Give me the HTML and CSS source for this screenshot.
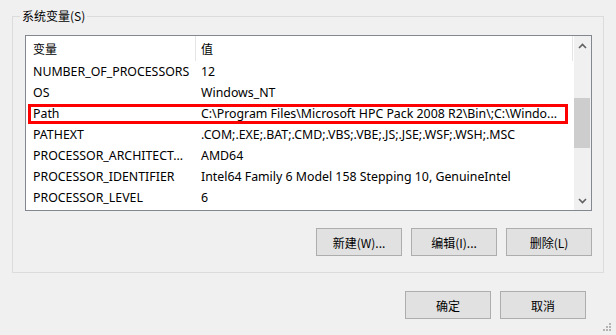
FILE: index.html
```html
<!DOCTYPE html>
<html lang="zh-CN">
<head>
<meta charset="utf-8">
<title>系统变量</title>
<link rel="stylesheet" href="styles.css">
</head>
<body>
<div class="group">
  <span class="group-title">系统变量(S)</span>
  <div class="listview">
    <div class="table">
      <div class="header">
        <div class="hcell c1">变量</div>
        <div class="hcell c2">值</div>
      </div>
      <div class="row"><div class="cell c1">NUMBER_OF_PROCESSORS</div><div class="cell c2">12</div></div>
      <div class="row"><div class="cell c1">OS</div><div class="cell c2">Windows_NT</div></div>
      <div class="row"><div class="cell c1">Path</div><div class="cell c2">C:\Program Files\Microsoft HPC Pack 2008 R2\Bin\;C:\Windo...</div></div>
      <div class="row"><div class="cell c1">PATHEXT</div><div class="cell c2">.COM;.EXE;.BAT;.CMD;.VBS;.VBE;.JS;.JSE;.WSF;.WSH;.MSC</div></div>
      <div class="row"><div class="cell c1">PROCESSOR_ARCHITECT...</div><div class="cell c2">AMD64</div></div>
      <div class="row"><div class="cell c1">PROCESSOR_IDENTIFIER</div><div class="cell c2">Intel64 Family 6 Model 158 Stepping 10, GenuineIntel</div></div>
      <div class="row"><div class="cell c1">PROCESSOR_LEVEL</div><div class="cell c2">6</div></div>
    </div>
    <div class="scrollbar">
      <div class="sb-btn">
        <svg width="17" height="17" viewBox="0 0 17 17"><polyline points="5,12 8.5,8.5 12,12" fill="none" stroke="#606060" stroke-width="1.6"/></svg>
      </div>
      <div class="sb-track"><div class="sb-thumb"></div></div>
      <div class="sb-btn">
        <svg width="17" height="17" viewBox="0 0 17 17"><polyline points="5,6 8.5,9.5 12,6" fill="none" stroke="#606060" stroke-width="1.6"/></svg>
      </div>
    </div>
    <div class="highlight"></div>
  </div>
  <div class="btn-row">
    <button class="btn">新建(W)...</button>
    <button class="btn">编辑(I)...</button>
    <button class="btn">删除(L)</button>
  </div>
</div>
<div class="dialog-row">
  <button class="btn">确定</button>
  <button class="btn">取消</button>
</div>
<svg class="grip" width="12" height="12" viewBox="0 0 12 12">
  <rect x="7" y="1" width="2" height="2" fill="#b4b4b4"/>
  <rect x="4" y="4" width="2" height="2" fill="#b4b4b4"/>
  <rect x="7" y="4" width="2" height="2" fill="#b4b4b4"/>
  <rect x="1" y="7" width="2" height="2" fill="#b4b4b4"/>
  <rect x="4" y="7" width="2" height="2" fill="#b4b4b4"/>
  <rect x="7" y="7" width="2" height="2" fill="#b4b4b4"/>
</svg>
</body>
</html>
```
FILE: styles.css
```css
html, body {
  margin: 0;
  padding: 0;
  background: #f0f0f0;
  width: 616px;
  height: 335px;
  overflow: hidden;
}
body {
  position: relative;
  font-family: "Noto Sans", "Noto Sans CJK SC", sans-serif;
  font-size: 12px;
  color: #000;
}
.group {
  position: relative;
  margin: 16px 0 0 12px;
  width: 567px;
  border: 1px solid #dcdcdc;
  padding: 18px 11px 16px 12px;
}
.group-title {
  position: absolute;
  left: 7px;
  top: -9px;
  padding: 0 2px;
  line-height: 16px;
  background: #f0f0f0;
  font-family: "Noto Sans CJK SC", "Noto Sans", sans-serif;
}
.listview {
  position: relative;
  display: flex;
  height: 174px;
  border: 1px solid #828790;
  background: #fff;
}
.table {
  width: 548px;
  overflow: hidden;
}
.header {
  display: flex;
  height: 25px;
}
.hcell {
  display: flex;
  align-items: center;
  font-family: "Noto Sans CJK SC", sans-serif;
  box-sizing: border-box;
  border-right: 1px solid #e5e5e5;
}
.hcell.c1 { width: 170px; padding-left: 7px; }
.hcell.c2 { width: 377px; padding-left: 5px; }
.row {
  display: flex;
  height: 21px;
  align-items: center;
  white-space: nowrap;
  font-size: 12.35px;
}
.cell {
  box-sizing: border-box;
  overflow: hidden;
}
.cell.c1 { width: 170px; padding-left: 7px; }
.cell.c2 { flex: 1; padding-left: 5px; }
.scrollbar {
  width: 17px;
  display: flex;
  flex-direction: column;
  background: #f0f0f0;
}
.sb-btn {
  height: 17px;
}
.sb-btn svg { display: block; }
.sb-track {
  flex: 1;
}
.sb-thumb {
  margin: 45px 1px 0 0;
  height: 50px;
  background: #cdcdcd;
}
.highlight {
  position: absolute;
  left: 2px;
  top: 68px;
  width: 534px;
  height: 14px;
  border: 3px solid #ff0000;
}
.btn-row {
  display: flex;
  justify-content: flex-end;
  gap: 9px;
  margin-top: 17px;
}
.btn {
  width: 86px;
  height: 28px;
  border: 1px solid #adadad;
  background: #e1e1e1;
  font-family: "Noto Sans CJK SC", "Noto Sans", sans-serif;
  font-size: 12px;
  color: #000;
  padding: 0;
  margin: 0;
}
.dialog-row {
  display: flex;
  justify-content: flex-end;
  gap: 9px;
  margin-top: 18px;
  padding-right: 30px;
}
.grip {
  position: absolute;
  right: 2px;
  bottom: 1px;
}
```
